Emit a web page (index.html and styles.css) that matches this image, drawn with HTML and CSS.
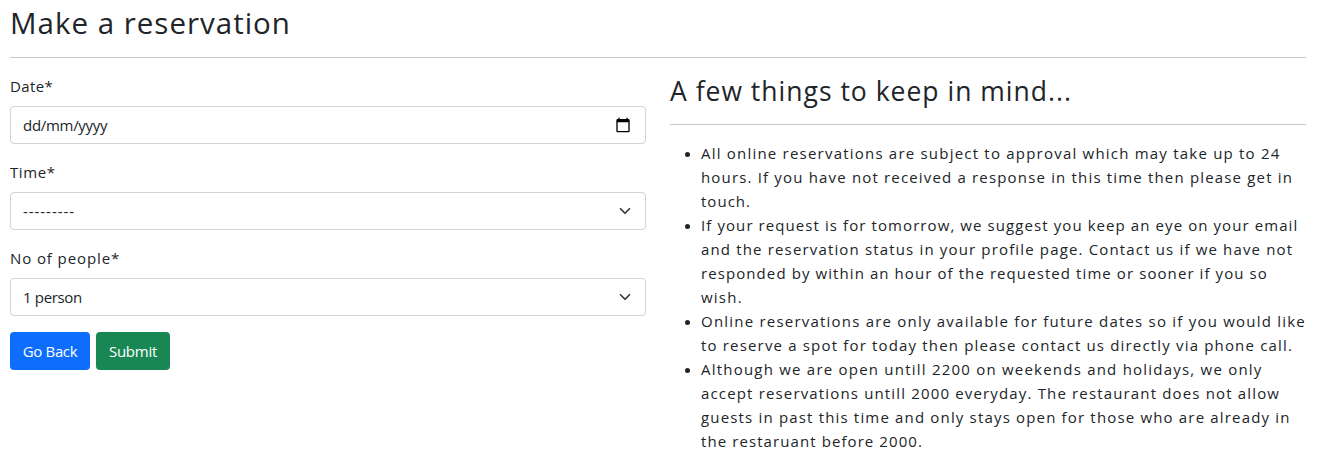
FILE: index.html
```
<!DOCTYPE html>
<html lang="en">
<head>
<meta charset="utf-8">
<title>Make a reservation</title>
<link rel="stylesheet" href="styles.css">
</head>
<body>
<main class="page">
  <h1 class="title">Make a reservation</h1>
  <div class="columns">
    <form class="form">
      <label class="label label-date">Date*</label>
      <div class="control">
        <span class="value value-date">dd/mm/yyyy</span>
        <svg class="calendar" width="16" height="16" viewBox="0 0 24 24"><path d="M20 3h-1V1h-2v2H7V1H5v2H4c-1.100 0-2 .9-2 2v16c0 1.100.9 2 2 2h16c1.100 0 2-.9 2-2V5c0-1.100-.9-2-2-2zm0 18H4V8h16v13z"/></svg>
      </div>
      <label class="label label-time">Time*</label>
      <div class="control">
        <span class="value value-time">---------</span>
        <svg class="chevron" width="16" height="12" viewBox="0 0 16 16"><path d="M2 5l6 6 6-6"/></svg>
      </div>
      <label class="label label-people">No of people*</label>
      <div class="control">
        <span class="value value-people">1 person</span>
        <svg class="chevron" width="16" height="12" viewBox="0 0 16 16"><path d="M2 5l6 6 6-6"/></svg>
      </div>
      <div class="actions">
        <button type="button" class="btn btn-back">Go Back</button>
        <button type="button" class="btn btn-submit">Submit</button>
      </div>
    </form>
    <section class="notes">
      <h2 class="subtitle">A few things to keep in mind...</h2>
      <ul class="list">
        <li class="item"><div>
          <span class="line s6">All online reservations are subject to approval which may take up to 24</span>
          <span class="line s5">hours. If you have not received a response in this time then please get in</span>
          <span class="line s2">touch.</span>
        </div></li>
        <li class="item"><div>
          <span class="line s3">If your request is for tomorrow, we suggest you keep an eye on your email</span>
          <span class="line s4">and the reservation status in your profile page. Contact us if we have not</span>
          <span class="line s3">responded by within an hour of the requested time or sooner if you so</span>
          <span class="line s7">wish.</span>
        </div></li>
        <li class="item"><div>
          <span class="line s6">Online reservations are only available for future dates so if you would like</span>
          <span class="line s5">to reserve a spot for today then please contact us directly via phone call.</span>
        </div></li>
        <li class="item"><div>
          <span class="line s7">Although we are open untill 2200 on weekends and holidays, we only</span>
          <span class="line s4">accept reservations untill 2000 everyday. The restaurant does not allow</span>
          <span class="line s5">guests in past this time and only stays open for those who are already in</span>
          <span class="line s3">the restaruant before 2000.</span>
        </div></li>
      </ul>
    </section>
  </div>
</main>
</body>
</html>
```
FILE: styles.css
```
* { box-sizing: border-box; }
body {
  margin: 0;
  background: #fff;
  color: #212529;
  font: 15px/24px "Open Sans", "Noto Sans", sans-serif;
  overflow: hidden;
}
.page { padding: 3px 15px 0 10px; }
.title {
  margin: 0;
  height: 55px;
  border-bottom: 1px solid #c8c8c9;
  font-size: 29.5px;
  line-height: 39px;
  font-weight: 400;
  letter-spacing: 1px;
}
.columns {
  display: grid;
  grid-template-columns: 1fr 1fr;
  column-gap: 24px;
  padding-top: 16px;
}
.label { display: block; margin-bottom: 8px; }
.label-date { letter-spacing: 0.4px; }
.label-time { letter-spacing: 0.6px; }
.label-people { letter-spacing: 0.9px; }
.control {
  display: flex;
  align-items: center;
  justify-content: space-between;
  height: 38px;
  margin-bottom: 16px;
  padding: 0 12px;
  border: 1px solid #ced4da;
  border-radius: 4px;
}
.value-date { letter-spacing: -0.3px; }
.value-time { letter-spacing: 0.95px; }
.value-people { letter-spacing: -0.33px; }
.calendar { margin-right: 2px; fill: #000; }
.chevron {
  fill: none;
  stroke: #343a40;
  stroke-width: 2.3;
  stroke-linecap: round;
  stroke-linejoin: round;
}
.actions { display: flex; gap: 6px; }
.btn {
  height: 38px;
  padding: 0;
  border: 0;
  border-radius: 4px;
  color: #fff;
  font: inherit;
}
.btn-back { width: 80px; background: #0d6efd; letter-spacing: -0.35px; }
.btn-submit { width: 74px; background: #198754; letter-spacing: -0.27px; }
.subtitle {
  margin: 0 0 16px;
  height: 51px;
  border-bottom: 1px solid #c8c8c9;
  font-size: 26.5px;
  line-height: 34px;
  font-weight: 400;
  letter-spacing: 1px;
}
.list { margin: 0; padding: 0; list-style: none; }
.item { display: flex; padding-left: 15px; }
.item::before {
  content: "";
  flex: none;
  width: 5px;
  height: 5px;
  margin: 11px 11px 0 0;
  border-radius: 50%;
  background: #212529;
}
.line { display: block; white-space: nowrap; }
.s2 { letter-spacing: 1.02px; }
.s3 { letter-spacing: 1.085px; }
.s4 { letter-spacing: 1.156px; }
.s5 { letter-spacing: 1.17px; }
.s6 { letter-spacing: 1.213px; }
.s7 { letter-spacing: 1.22px; }
```
